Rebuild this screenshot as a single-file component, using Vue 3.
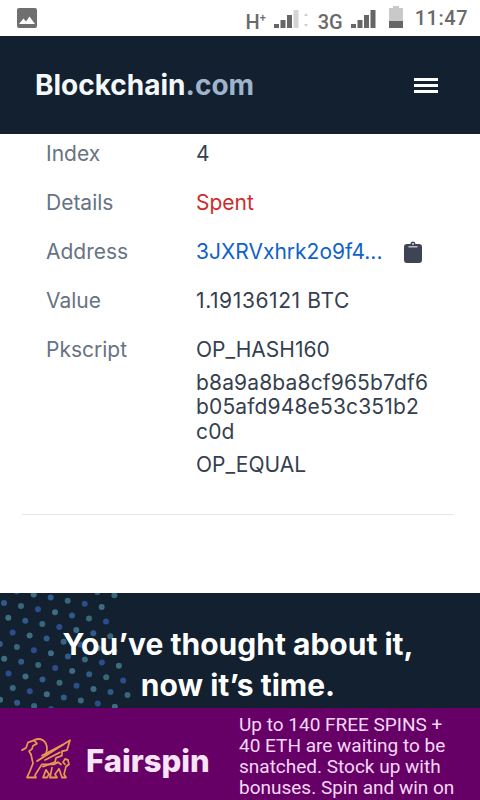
<template>
  <div class="page">
    <div class="status-bar">
      <svg class="picture-icon" width="22" height="22" viewBox="0 0 22 22">
        <rect x="1" y="1" width="20" height="20" rx="2" fill="#6f6f6f" />
        <path d="M3 17l4.500-5.500 2.500 3 3.500-5 5.500 7.500z" fill="#fff" />
      </svg>
      <div class="status-right">
        <span class="net">H<sup>+</sup></span>
        <svg class="bars" width="26" height="20" viewBox="0 0 26 20">
          <rect x="0" y="14" width="5" height="4" fill="#666" />
          <rect x="6.500" y="10" width="5" height="8" fill="#666" />
          <rect x="13" y="5" width="5" height="13" fill="#666" />
          <rect x="19.500" y="0" width="5" height="18" fill="#d4d4d4" />
        </svg>
        <svg class="arrows" width="6" height="20" viewBox="0 0 6 20">
          <path d="M3 3l2 3H1zM3 17l2-3H1z" fill="#cfcfcf" />
        </svg>
        <span class="net three-g">3G</span>
        <svg class="bars" width="26" height="20" viewBox="0 0 26 20">
          <rect x="0" y="14" width="5" height="4" fill="#666" />
          <rect x="6.500" y="10" width="5" height="8" fill="#666" />
          <rect x="13" y="5" width="5" height="13" fill="#666" />
          <rect x="19.500" y="0" width="5" height="18" fill="#666" />
        </svg>
        <svg class="battery" width="14" height="22" viewBox="0 0 14 22">
          <path d="M4 0h6v2h4v20H0V2h4z" fill="#c9c9c9" />
          <rect y="15" width="14" height="7" fill="#666" />
        </svg>
        <span class="clock">11:47</span>
      </div>
    </div>

    <header class="top-nav">
      <div class="logo">Blockchain<span>.com</span></div>
      <div class="burger"><i></i><i></i><i></i></div>
    </header>

    <main class="detail">
      <div class="row">
        <div class="label">Index</div>
        <div class="value">4</div>
      </div>
      <div class="row">
        <div class="label">Details</div>
        <div class="value spent">Spent</div>
      </div>
      <div class="row">
        <div class="label">Address</div>
        <div class="value address">
          <a>3JXRVxhrk2o9f4...</a>
          <svg width="18" height="22" viewBox="0 0 18 22">
            <path
              d="M3 3h3.500a2.500 2.500 0 0 1 5 0H15a3 3 0 0 1 3 3v13a3 3 0 0 1-3 3H3a3 3 0 0 1-3-3V6a3 3 0 0 1 3-3z"
              fill="#3f4454"
            />
            <rect x="4.500" y="5" width="9" height="1.500" fill="#b9bcc6" />
            <circle cx="9" cy="2.800" r="0.900" fill="#fff" />
          </svg>
        </div>
      </div>
      <div class="row">
        <div class="label">Value</div>
        <div class="value amount">1.19136121 BTC</div>
      </div>
      <div class="row">
        <div class="label">Pkscript</div>
        <div class="value script">
          <div>OP_HASH160</div>
          <div class="hash">b8a9a8ba8cf965b7df6<br />b05afd948e53c351b2<br />c0d</div>
          <div>OP_EQUAL</div>
        </div>
      </div>
      <hr class="divider" />
    </main>

    <section class="promo">
      <svg class="dots" width="140" height="115" viewBox="0 0 140 115">
        <circle
          v-for="(d, i) in dots"
          :key="i"
          :cx="d.x"
          :cy="d.y"
          r="3"
          :fill="d.color"
        />
      </svg>
      <h2>You’ve thought about it,<br />now it’s time.</h2>
    </section>

    <aside class="ad">
      <div class="brand">
        <svg class="griffin" width="54" height="46" viewBox="0 0 54 42" preserveAspectRatio="none" fill="none" stroke="#e8994e" stroke-width="1.700" stroke-linejoin="round" stroke-linecap="round">
          <path d="M2 12l4-2 2-5 6-2 3 3-4 2-1 3-3 2 2 3" />
          <path d="M14 3c6-3 13 0 13 8l-1 5" />
          <path d="M11 16l2 8-3 7-3 6h9l-1-2 4-6 3-4h12l4-2 3 2" />
          <path d="M17 22L50 3l-3 9-5 1v4l-6 2-1 4-12 4" />
          <path d="M22 17l21-10M25 21l15-7" />
          <path d="M23 37l3-7 3 4-2 3zM32 28l-2 9h7l-2-3 4-5 3 8h4l-2-3 2-7 3-2-1-4-3-1-2 3 2 2" />
        </svg>
        <span class="brand-name">Fairspin</span>
      </div>
      <p>Up to 140 FREE SPINS +<br />40 ETH are waiting to be snatched. Stock up with bonuses. Spin and win on</p>
    </aside>
  </div>
</template>

<script setup>
// dot lattice behind the promo headline
const dots = [];
const colors = ["#2f5a8a", "#38667a", "#2c4d8c", "#3f6c80"];
for (let r = -3; r < 10; r++) {
  for (let c = -8; c < 10; c++) {
    const x = 4 + c * 17 + r * 4.3;
    const y = 10 + c * 3.1 + r * 14.7;
    if (x < -2 || y < -2 || y > 117) continue;
    if (x > 115 + y * 0.14) continue;
    dots.push({ x, y, color: colors[(r * 3 + c * 5 + 80) % 4] });
  }
}
</script>

<style>
html,
body {
  margin: 0;
  overflow: hidden;
}
</style>

<style scoped>
.page {
  position: relative;
  width: 480px;
  height: 800px;
  overflow: hidden;
  background: #fff;
  font-family: Inter, "Liberation Sans", sans-serif;
}

.status-bar {
  height: 36px;
  display: flex;
  align-items: center;
  justify-content: space-between;
  padding: 0 12px 0 16px;
  box-sizing: border-box;
  font-family: Roboto, sans-serif;
  color: #6a6a6a;
}

.status-right {
  display: flex;
  align-items: center;
}

.net {
  font-size: 20px;
  font-weight: 500;
  margin-top: 7px;
  line-height: 20px;
}

.net sup {
  font-size: 11px;
  line-height: 0;
}

.bars {
  margin-left: 8px;
  margin-top: 3px;
}

.arrows {
  margin-left: 3px;
  margin-top: 3px;
}

.three-g {
  margin-left: 9px;
}

.battery {
  margin-left: 12px;
  margin-top: -2px;
}

.clock {
  font-size: 20px;
  font-weight: 500;
  margin-left: 12px;
  letter-spacing: 0.5px;
}

.top-nav {
  height: 98px;
  background: #12202f;
  display: flex;
  align-items: center;
  justify-content: space-between;
  padding: 0 42px 0 35px;
}

.logo {
  font-size: 28px;
  font-weight: 700;
  color: #f4f8fb;
}

.logo span {
  color: #9db4cc;
}

.burger {
  display: flex;
  flex-direction: column;
  gap: 3px;
}

.burger i {
  display: block;
  width: 24px;
  height: 3px;
  background: #fff;
}

.detail {
  height: 459px;
  padding: 0 26px 0 22px;
  box-sizing: border-box;
}

.row {
  display: flex;
  padding-left: 24px;
  font-size: 21px;
  line-height: 24px;
  margin-bottom: 25px;
}

.row:first-child {
  padding-top: 8px;
}

.label {
  width: 150px;
  color: #677383;
}

.value {
  color: #353f4f;
  flex: 1;
}

.amount {
  letter-spacing: 0.6px;
}

.spent {
  color: #cf2b2b;
}

.address {
  display: flex;
  align-items: center;
  gap: 22px;
}

.address a {
  color: #0f62cc;
}

.script .hash {
  margin: 8.500px 0;
  line-height: 24.500px;
  letter-spacing: 0.15px;
}

.divider {
  border: 0;
  border-top: 1px solid #e3e6ea;
  margin: 37px 0 0;
}

.promo {
  position: relative;
  height: 115px;
  background: #12202f;
  overflow: hidden;
}

.dots {
  position: absolute;
  left: 0;
  top: 0;
}

.promo h2 {
  position: relative;
  margin: 0;
  padding: 31px 4px 0 0;
  text-align: center;
  color: #fff;
  font-size: 30px;
  line-height: 41px;
  font-weight: 700;
}

.ad {
  position: absolute;
  left: 0;
  right: 0;
  bottom: 0;
  height: 92px;
  background: #660066;
  display: flex;
  align-items: flex-start;
  overflow: hidden;
}

.brand {
  width: 239px;
  flex: none;
  display: flex;
  align-items: center;
  height: 100%;
  padding: 12px 0 0 20px;
  box-sizing: border-box;
}

.griffin {
  flex: none;
}

.brand-name {
  margin-left: 12px;
  font-size: 31px;
  font-weight: 800;
  color: #f8e4f8;
}

.ad p {
  margin: 6px 0 0;
  font-family: Roboto, sans-serif;
  font-size: 19px;
  line-height: 21px;
  color: #f5d8f5;
}
</style>
